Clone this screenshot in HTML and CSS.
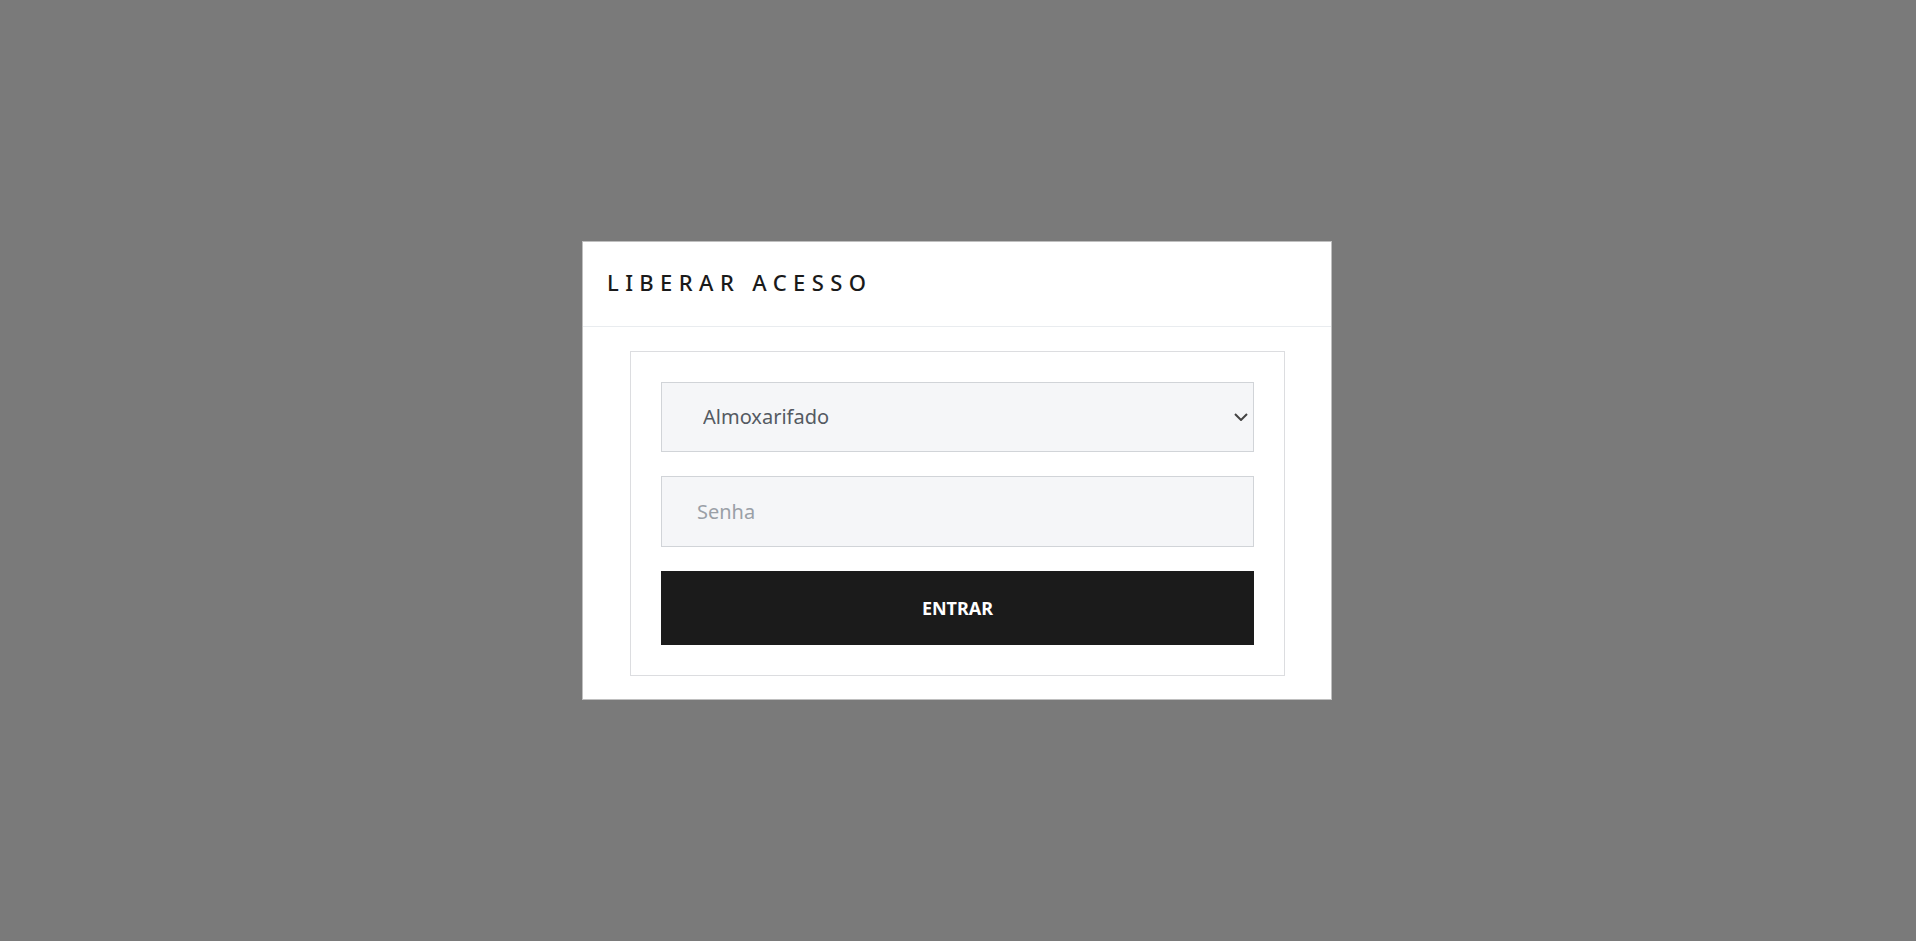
FILE: index.html
```html
<!DOCTYPE html>
<html lang="pt-BR">
<head>
    <meta charset="UTF-8" />
    <meta name="viewport" content="width=device-width, initial-scale=1.0" />
    <title>Liberar Acesso</title>
    <link rel="stylesheet" href="styles.css">
</head>
<body>
    <div class="overlay">
        <div class="modal">
            <div class="modal-header">
                <h1>LIBERAR ACESSO</h1>
            </div>
            <div class="modal-body">
                <form id="access-form" class="card">
                    <div class="select-wrap">
                        <select id="setor">
                            <option>Almoxarifado</option>
                        </select>
                        <svg class="chevron" width="14" height="8" viewBox="0 0 14 8">
                            <path d="M1 1l6 6 6-6" fill="none" stroke="#444" stroke-width="2" />
                        </svg>
                    </div>
                    <input type="password" id="senha" placeholder="Senha" />
                    <button type="submit">ENTRAR</button>
                </form>
            </div>
        </div>
    </div>
</body>
</html>
```

FILE: styles.css
```css
* {
    margin: 0;
    padding: 0;
    box-sizing: border-box;
    font-family: 'Noto Sans', 'Open Sans', sans-serif;
}

body {
    background-color: #7a7a7a;
    height: 100vh;
}

.overlay {
    display: flex;
    justify-content: center;
    align-items: center;
    height: 100vh;
    padding-right: 2px;
}

.modal {
    width: 750px;
    background-color: #fff;
    border: 1px solid rgba(0, 0, 0, 0.25);
}

.modal-header {
    display: flex;
    align-items: center;
    height: 85px;
    padding: 0 24px 4px;
    border-bottom: 1px solid #e9ecef;
}

h1 {
    font-size: 22px;
    font-weight: 500;
    letter-spacing: 6.4px;
    color: #1a1a1a;
}

.modal-body {
    padding: 24px 46px 23px 47px;
}

.card {
    display: flex;
    flex-direction: column;
    gap: 24px;
    padding: 30px;
    border: 1px solid #dcdde0;
}

.select-wrap {
    position: relative;
}

select,
input {
    width: 100%;
    border: 1px solid #d1d4d8;
    background-color: #f5f6f8;
    font-size: 20px;
    outline: none;
}

select {
    height: 70px;
    padding-left: 41px;
    padding-bottom: 2px;
    color: #545a62;
    appearance: none;
}

.chevron {
    position: absolute;
    right: 6px;
    top: 31px;
    pointer-events: none;
}

input {
    height: 71px;
    padding-left: 35px;
    color: #545a62;
}

input::placeholder {
    color: #9aa0a7;
}

button {
    height: 74px;
    border: none;
    background-color: #1b1b1b;
    color: #fff;
    font-size: 18px;
    font-weight: 700;
    cursor: pointer;
}
```
